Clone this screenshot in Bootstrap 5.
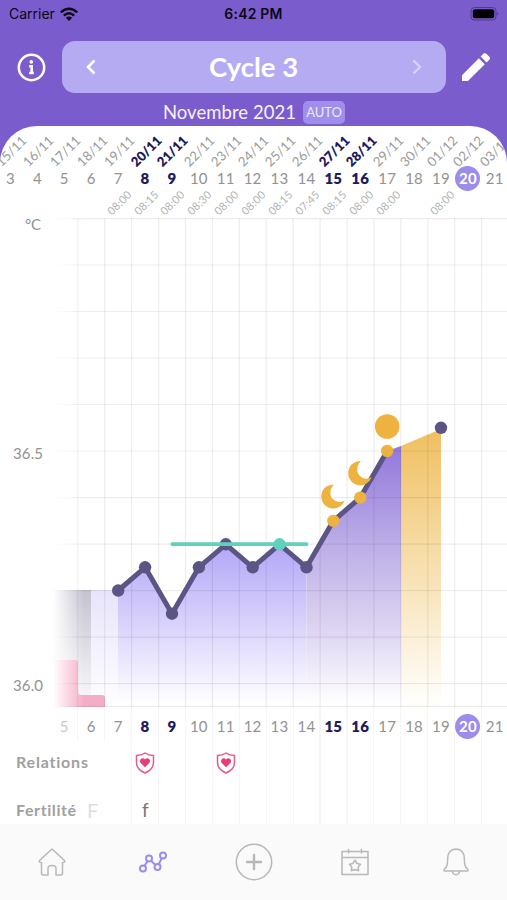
<!DOCTYPE html>
<html lang="fr">
<head>
<meta charset="utf-8">
<meta name="viewport" content="width=device-width, initial-scale=1">
<title>Cycle 3</title>
<link href="https://cdn.jsdelivr.net/npm/bootstrap@5.3.0/dist/css/bootstrap.min.css" rel="stylesheet">
<style>
body{font-family:"Lato","Open Sans",sans-serif;width:507px;height:900px;background:#7b5ccd;color:#929292}
svg{display:block}
.status{height:28px;font:400 14px/28px "Inter",sans-serif;color:#0c0716}
.status .clock{font-weight:600;letter-spacing:.2px}
.carrier{padding-left:1px}
.titlebar{height:52px;margin-top:13px;padding:0 16px 0 17px}
.pill{width:384px;height:52px;border-radius:13px;background:#b5abf3;color:#fff;padding:0 23px}
.pill h1{font-size:27.5px;font-weight:700;letter-spacing:0;line-height:50px}
.month{height:33px;font-size:18.5px;color:#f6f2ff;gap:7px;padding:5px 0 0 1px}
.month .label{letter-spacing:.05px;line-height:28px}
.auto{width:42px;height:23px;border-radius:5px;background:#9f8eee;color:#eeeaff;font-size:13px;line-height:23px;letter-spacing:-.1px}
.sheet{height:698px;background:#fff;border-radius:37px 37px 0 0}
.days{margin-left:-3px}
.days>div{flex:0 0 26.92px;min-width:0;text-align:center;white-space:nowrap}
.dates{height:39px;padding-top:11px;font-size:13.2px;color:#9a9a9a}
.dates span,.times span{display:block;width:40px;line-height:28px;margin-left:-6px;transform:rotate(-45deg)}
.numbers{height:26px;line-height:25px;font-size:15px;letter-spacing:.2px;padding-top:.5px}
.times{height:27px;font-size:11px;color:#b3b3b3}
.times span{line-height:23px;letter-spacing:.1px}
.strong{font-weight:800;color:#211a5c}
.today{display:block;width:25px;height:25px;line-height:25px;margin:0 1px;border-radius:50%;background:#9c8dec;color:#fff;font-weight:700}
.lower{height:117px;background:repeating-linear-gradient(90deg,#f6f6f6 0 1.2px,transparent 1.2px 26.92px) 131px 0/376px 100% no-repeat,repeating-linear-gradient(90deg,#f6f6f6 0 1.2px,transparent 1.2px 26.92px) 77.2px 0/50px 34px no-repeat}
.lower .numbers{padding-top:7px;height:32px}
.rows-area{font-size:16px;font-weight:700;letter-spacing:.8px;color:#a0a0a0}
.rows-area .rowline{height:48.5px;padding-left:16px}
.rows-area .name{width:71px;padding-bottom:3px;white-space:nowrap}
.rows-area .fertility{letter-spacing:.6px}
.ghost{width:53px;color:#dedede;line-height:24px;padding-bottom:3px}
.fert{font-size:19px;color:#777;padding-left:2px;line-height:24px;padding-bottom:4px}
.tabs{height:76px;background:#fafafa;padding-left:1px}
.tabs a{height:76px;flex:0 0 101.2px}
.tabs svg{fill:none;stroke:#b8b8b8;stroke-width:1.5;stroke-linejoin:round;stroke-linecap:round}
.tabs .active svg{stroke:#9c8dec;stroke-width:2}
.second{margin-left:61px}
</style>
<script src="https://cdn.jsdelivr.net/npm/bootstrap@5.3.0/dist/js/bootstrap.bundle.min.js"></script>
</head>
<body class="overflow-hidden">
<div class="status d-flex align-items-center px-2">
  <div class="d-flex align-items-center w-25 gap-1"><span class="carrier">Carrier</span>
    <svg width="20" height="15" viewBox="0 0 20 15" fill="none" stroke="#0c0716" stroke-width="2.5"><path d="M1.8 5.4Q10-2 18.2 5.4M4.8 8.6Q10 4 15.2 8.6"/><path d="M10 14L6.8 10.8Q10 8.2 13.2 10.8Z" fill="#0c0716" stroke="none"/></svg></div>
  <div class="clock flex-fill text-center">6:42 PM</div>
  <div class="w-25 d-flex justify-content-end">
    <svg width="31" height="15" viewBox="0 0 31 15"><rect x="3" y=".5" width="25" height="12.5" rx="3.5" fill="none" stroke="#503b87"/><rect x="4.8" y="2.3" width="21.4" height="9" rx="2" fill="#000"/><path d="M29 5q2.5 1.8 0 3.6z" fill="#503b87"/></svg></div>
</div>
<header class="titlebar d-flex align-items-center justify-content-between">
  <svg width="29" height="29" viewBox="0 0 29 29" fill="none" stroke="#fff"><circle cx="14.5" cy="14.5" r="12.7" stroke-width="2.5"/><circle cx="14.3" cy="8.9" r="1.8" fill="#fff" stroke="none"/><path d="M12.2 13.2h2.5v6.6M12.2 20h4.6" stroke-width="2.6"/></svg>
  <div class="pill d-flex align-items-center justify-content-between">
    <svg width="12" height="16" viewBox="0 0 12 16" fill="none" stroke="#fff" stroke-width="2.6"><path d="M9.5 1.5L3 8l6.5 6.5"/></svg>
    <h1 class="m-0">Cycle 3</h1>
    <svg width="12" height="16" viewBox="0 0 12 16" fill="none" stroke="#d8d1fa" stroke-width="2.4"><path d="M2.5 1.5L9 8l-6.5 6.5"/></svg>
  </div>
  <svg width="30" height="30" viewBox="0 0 30 30" fill="#fff"><path d="M1 23.2L17.9 6.3L23.8 12.2L6.9 29H1zM19.6 4.6L22.6 1.6Q24 .7 25.3 1.8L28.6 5.1Q29.6 6.3 28.6 7.5L25.5 10.5z"/></svg>
</header>
<div class="month d-flex justify-content-center align-items-center"><span class="label">Novembre 2021</span><span class="auto text-center">AUTO</span></div>

<main class="sheet overflow-hidden">
  <div class="days dates d-flex" id="dates"></div>
  <div class="days numbers d-flex" id="topNumbers"></div>
  <div class="days times d-flex" id="times"></div>
  <svg width="507" height="489" viewBox="0 218 507 489">
    <defs>
      <linearGradient id="lav" gradientUnits="userSpaceOnUse" x1="0" y1="540" x2="0" y2="704"><stop stop-color="#b0a4f7"/><stop offset="1" stop-color="#fff"/></linearGradient>
      <linearGradient id="vio" gradientUnits="userSpaceOnUse" x1="0" y1="446" x2="0" y2="704"><stop stop-color="#9378db"/><stop offset=".4" stop-color="#beb0e7"/><stop offset=".72" stop-color="#ded6f2"/><stop offset="1" stop-color="#fff"/></linearGradient>
      <linearGradient id="gold" gradientUnits="userSpaceOnUse" x1="0" y1="428" x2="0" y2="700"><stop stop-color="#efbf5f"/><stop offset=".5" stop-color="#f7dfae"/><stop offset="1" stop-color="#fffefb"/></linearGradient>
      <linearGradient id="pale" x2="0" y2="1"><stop stop-color="#e8e4fb"/><stop offset="1" stop-color="#fff"/></linearGradient>
      <linearGradient id="gray" x2="0" y2="1"><stop stop-color="#c4c2d0"/><stop offset=".95" stop-color="#f8f8fa"/></linearGradient>
      <linearGradient id="fade" gradientUnits="userSpaceOnUse" x1="53" y1="0" x2="84" y2="0"><stop stop-color="#fff"/><stop offset="1" stop-color="#fff" stop-opacity="0"/></linearGradient>
      <path id="moon" d="M.7-12.1A12.1 12.1 0 1 0 11.5 3.8A9.3 9.3 0 0 1 -2.9 -2Q-3.4-8 .7-12.1Z" fill="#edb240"/>
    </defs>
    <path d="M118 590.5L145 567.3L172 613.7L199 567.3L226 544L252.6 567.3L279.5 544L306.4 567.3V707H118Z" fill="url(#lav)"/>
    <path d="M306.4 567.3L333.3 520.8L360.2 497.5L387.1 451L401 446V707H306.4Z" fill="url(#vio)"/>
    <path d="M401 446L441 429V707H401Z" fill="url(#gold)"/>
    <path d="M91 590H118V707H91Z" fill="url(#pale)"/>
    <path d="M53 590H91V707H53Z" fill="url(#gray)"/>
    <path d="M53 660H75Q78 660 78 663V692Q78 695 81 695H102Q105 695 105 698V707H53Z" fill="#f5adc6"/>
    <g stroke="#000" stroke-opacity=".07" stroke-width="1.2">
      <path d="M53 218.6H507M53 265H507M53 311.5H507M53 358H507M53 404.5H507M53 451H507M53 497.6H507M53 544.1H507M53 590.6H507M53 637.2H507M53 683.7H507M53 706.4H507"/>
      <path id="verticals"/>
    </g>
    <path d="M52 218H90V707H52Z" fill="url(#fade)"/>
    <path d="M118.2 590.5L145.1 567.3L172 613.7L198.9 567.3L225.8 544.3L252.7 567.3L279.6 544.3L306.5 567.3L333.4 520.8L360.3 497.6L387.2 451" fill="none" stroke="#5a5584" stroke-width="5" stroke-linejoin="round"/>
    <g fill="#5a5584"><circle cx="118.2" cy="590.5" r="6.2"/><circle cx="145.1" cy="567.3" r="6.2"/><circle cx="172" cy="613.7" r="6.2"/><circle cx="198.9" cy="567.3" r="6.2"/><circle cx="225.8" cy="544.3" r="6.2"/><circle cx="252.7" cy="567.3" r="6.2"/><circle cx="306.5" cy="567.3" r="6.2"/><circle cx="441" cy="427.8" r="6.2"/></g>
    <path d="M172.3 544.1H306.5" stroke="#5dd2bd" stroke-width="3.8" stroke-linecap="round"/><circle cx="279.5" cy="544.3" r="6.2" fill="#5dd2bd"/>
    <g fill="#edb240"><circle cx="333.4" cy="520.9" r="6.2"/><circle cx="360.3" cy="497.6" r="6.2"/><circle cx="387.2" cy="451" r="6.2"/><circle cx="387.2" cy="426.5" r="12.3"/></g>
    <use href="#moon" x="333.3" y="496.5"/><use href="#moon" x="360.2" y="473.2"/>
    <g fill="#929292" font-size="15"><text x="25" y="230" textLength="16">°C</text><text x="13" y="458.5" textLength="30">36.5</text><text x="13" y="691" textLength="30">36.0</text></g>
  </svg>
  <div class="lower">
    <div class="days numbers d-flex" id="bottomNumbers"></div>
    <div class="rows-area">
      <div class="rowline d-flex align-items-center">
        <span class="name">Relations</span>
        <svg class="ms-5" width="20" height="22" viewBox="0 0 20 22"><path id="shield" d="M10 1Q13.5 3.5 18.5 3.5V10.5Q18.5 17.5 10 21Q1.5 17.5 1.5 10.5V3.5Q6.5 3.5 10 1Z" fill="#fff" stroke="#e45b86" stroke-width="1.5"/><path id="heart" d="M10 15.3L5.7 11Q4.2 9 5.8 7.1Q8.2 5.4 10 7.5Q11.8 5.4 14.2 7.1Q15.8 9 14.3 11Z" fill="#e83e74"/></svg>
        <svg class="second" width="20" height="22" viewBox="0 0 20 22"><use href="#shield"/><use href="#heart"/></svg>
      </div>
      <div class="rowline d-flex align-items-center">
        <span class="name fertility">Fertilité</span>
        <span class="fw-normal fs-5 ghost">F</span>
        <span class="fw-normal fert">f</span>
      </div>
    </div>
  </div>
</main>
<nav class="tabs nav flex-nowrap">
  <a class="d-flex align-items-center justify-content-center" href="#" aria-label="Accueil"><svg width="30" height="30" viewBox="0 0 30 30"><path d="M15 2L2.5 13.5Q1.5 15.5 4.5 15.5V26.5Q4.5 28 6 28H11V21.5Q11 18.5 15 18.5Q19 18.5 19 21.5V28H24Q25.5 28 25.5 26.5V15.5Q28.5 15.5 27.5 13.5Z"/></svg></a>
  <a class="active d-flex align-items-center justify-content-center" href="#" aria-label="Courbe"><svg width="30" height="30" viewBox="0 0 30 30"><circle cx="5" cy="21.5" r="3"/><circle cx="11" cy="11.5" r="3"/><circle cx="19.5" cy="20" r="3"/><circle cx="25" cy="8.5" r="3"/><path d="M6.5 19L9.5 14M13 13.7L17.5 18M20.7 17.3L23.8 11.2"/></svg></a>
  <a class="d-flex align-items-center justify-content-center" href="#" aria-label="Ajouter"><svg width="38" height="38" viewBox="0 0 38 38"><circle cx="19" cy="19" r="17.7"/><path d="M19 12V26M12 19H26" stroke-width="2.4"/></svg></a>
  <a class="d-flex align-items-center justify-content-center" href="#" aria-label="Calendrier"><svg width="30" height="30" viewBox="0 0 30 30"><path d="M2 4.5H28V27.5H2ZM2 10.5H28M8.5 2.5V6M21.5 2.5V6M15 13.2L17 16.5L20.5 17.3L18.2 20L18.6 23.8L15 22.5L11.4 23.8L11.8 20L9.5 17.3L13 16.5Z"/></svg></a>
  <a class="d-flex align-items-center justify-content-center" href="#" aria-label="Rappels"><svg width="30" height="30" viewBox="0 0 30 30"><path d="M15 2Q7 2.5 6.7 11Q6.7 18 5 20.5L3 22.5Q2.5 24 4 24H26Q27.5 24 27 22.5L25 20.5Q23.3 18 23.3 11Q23 2.5 15 2ZM11.3 24.2Q12 27.7 15 27.7Q18 27.7 18.7 24.2"/></svg></a>
</nav>
<script>
const dates = ['15/11','16/11','17/11','18/11','19/11','20/11','21/11','22/11','23/11','24/11','25/11','26/11','27/11','28/11','29/11','30/11','01/12','02/12','03/12'];
const times = {7:'08:00',8:'08:15',9:'08:00',10:'08:30',11:'08:00',12:'08:00',13:'08:15',14:'07:45',15:'08:15',16:'08:00',17:'08:00',19:'08:00'};
const bold = [8, 9, 15, 16];
let d = '', n = '', b = '', t = '';
dates.forEach((date, i) => {
  const day = i + 3, cls = bold.includes(day) ? 'strong' : '';
  const label = day === 20 ? '<span class="today">20</span>' : day;
  d += `<div class="${cls}"><span>${date}</span></div>`;
  n += `<div class="${cls}">${label}</div>`;
  b += `<div class="${cls} ${day === 5 ? 'opacity-50' : ''}">${day < 5 ? '' : label}</div>`;
  t += `<div>${times[day] ? `<span>${times[day]}</span>` : ''}</div>`;
});
document.getElementById('dates').innerHTML = d;
document.getElementById('topNumbers').innerHTML = n;
document.getElementById('bottomNumbers').innerHTML = b;
document.getElementById('times').innerHTML = t;
let v = '';
for (let k = 0; k < 16; k++) v += `M${(77.8 + k * 26.92).toFixed(1)} 218V707`;
document.getElementById('verticals').setAttribute('d', v);
</script>
</body>
</html>
